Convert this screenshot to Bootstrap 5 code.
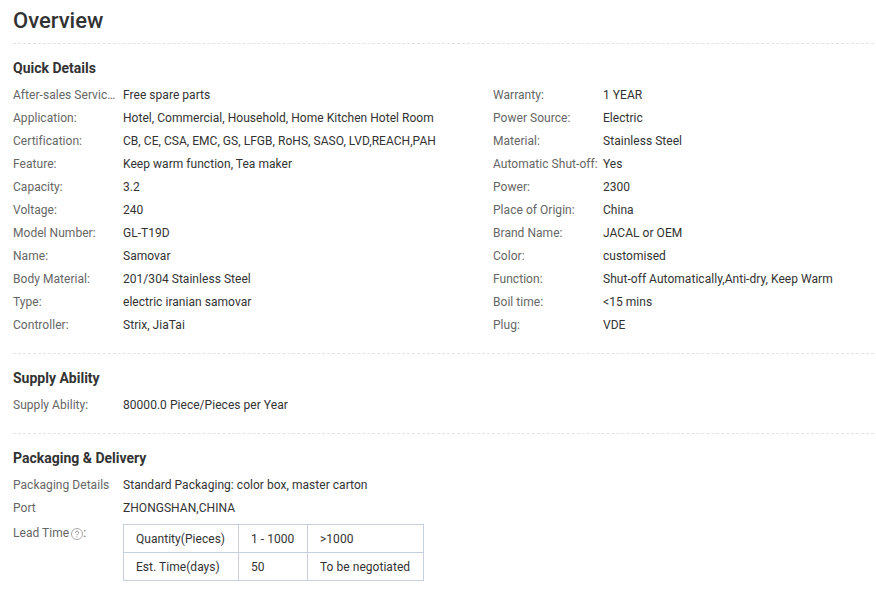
<!DOCTYPE html>
<html lang="en">
<head>
<meta charset="utf-8">
<title>Overview</title>
<link href="https://cdn.jsdelivr.net/npm/bootstrap@5.3.0/dist/css/bootstrap.min.css" rel="stylesheet">
<style>
body { font-family: Roboto, "Liberation Sans", sans-serif; font-size: 12px; line-height: 18px; letter-spacing: .04px; color: #333; background: #fff; }
.pg { padding: 0 2px 0 13px; }
.pg-title { font-size: 22px; line-height: 24px; font-weight: 500; letter-spacing: 0; margin: 0; padding: 9px 0 10px; color: #333; border-bottom: 1px dashed #e1e4e8; }
.sect { border-bottom: 1px dashed #e1e4e8; padding: 15px 0 17px; }
.sect-last { border-bottom: 0; padding-bottom: 0; }
.sect-head { font-size: 14px; line-height: 18px; font-weight: 700; letter-spacing: 0; margin: 0 0 6px; color: #333; }
.spec-grid { display: grid; grid-template-columns: 480px 1fr; }
.spec-row { display: flex; height: 23px; align-items: center; }
.spec-key { flex: 0 0 110px; width: 110px; color: #666; white-space: nowrap; }
.spec-key-cut { padding-right: 5px; overflow: hidden; text-overflow: ellipsis; }
.spec-val { color: #333; white-space: nowrap; }
.lead-row { display: flex; margin-top: 5px; }
.lead-key { flex: 0 0 110px; color: #666; }
.help-ic { display: inline-block; width: 12px; height: 12px; vertical-align: -3px; margin-left: -1px; }
.lead-tb { border-collapse: collapse; width: 301px; table-layout: fixed; }
.lead-tb td { border: 1px solid #c7d0e0; height: 28px; padding: 0 12px; color: #333; white-space: nowrap; }
</style>
</head>
<body>
<div class="pg">
  <h1 class="pg-title">Overview</h1>

  <section class="sect">
    <h2 class="sect-head">Quick Details</h2>
    <div class="spec-grid">
      <div class="spec-row"><div class="spec-key spec-key-cut">After-sales Service Provided:</div><div class="spec-val">Free spare parts</div></div>
      <div class="spec-row"><div class="spec-key">Warranty:</div><div class="spec-val">1 YEAR</div></div>
      <div class="spec-row"><div class="spec-key">Application:</div><div class="spec-val">Hotel, Commercial, Household, Home Kitchen Hotel Room</div></div>
      <div class="spec-row"><div class="spec-key">Power Source:</div><div class="spec-val">Electric</div></div>
      <div class="spec-row"><div class="spec-key">Certification:</div><div class="spec-val">CB, CE, CSA, EMC, GS, LFGB, RoHS, SASO, LVD,REACH,PAH</div></div>
      <div class="spec-row"><div class="spec-key">Material:</div><div class="spec-val">Stainless Steel</div></div>
      <div class="spec-row"><div class="spec-key">Feature:</div><div class="spec-val">Keep warm function, Tea maker</div></div>
      <div class="spec-row"><div class="spec-key">Automatic Shut-off:</div><div class="spec-val">Yes</div></div>
      <div class="spec-row"><div class="spec-key">Capacity:</div><div class="spec-val">3.2</div></div>
      <div class="spec-row"><div class="spec-key">Power:</div><div class="spec-val">2300</div></div>
      <div class="spec-row"><div class="spec-key">Voltage:</div><div class="spec-val">240</div></div>
      <div class="spec-row"><div class="spec-key">Place of Origin:</div><div class="spec-val">China</div></div>
      <div class="spec-row"><div class="spec-key">Model Number:</div><div class="spec-val">GL-T19D</div></div>
      <div class="spec-row"><div class="spec-key">Brand Name:</div><div class="spec-val">JACAL or OEM</div></div>
      <div class="spec-row"><div class="spec-key">Name:</div><div class="spec-val">Samovar</div></div>
      <div class="spec-row"><div class="spec-key">Color:</div><div class="spec-val">customised</div></div>
      <div class="spec-row"><div class="spec-key">Body Material:</div><div class="spec-val">201/304 Stainless Steel</div></div>
      <div class="spec-row"><div class="spec-key">Function:</div><div class="spec-val">Shut-off Automatically,Anti-dry, Keep Warm</div></div>
      <div class="spec-row"><div class="spec-key">Type:</div><div class="spec-val">electric iranian samovar</div></div>
      <div class="spec-row"><div class="spec-key">Boil time:</div><div class="spec-val">&lt;15 mins</div></div>
      <div class="spec-row"><div class="spec-key">Controller:</div><div class="spec-val">Strix, JiaTai</div></div>
      <div class="spec-row"><div class="spec-key">Plug:</div><div class="spec-val">VDE</div></div>
    </div>
  </section>

  <section class="sect">
    <h2 class="sect-head">Supply Ability</h2>
    <div class="spec-row"><div class="spec-key">Supply Ability:</div><div class="spec-val">80000.0 Piece/Pieces per Year</div></div>
  </section>

  <section class="sect sect-last">
    <h2 class="sect-head">Packaging &amp; Delivery</h2>
    <div class="spec-row"><div class="spec-key">Packaging Details</div><div class="spec-val">Standard Packaging: color box, master carton</div></div>
    <div class="spec-row"><div class="spec-key">Port</div><div class="spec-val">ZHONGSHAN,CHINA</div></div>
    <div class="lead-row">
      <div class="lead-key">Lead Time <svg class="help-ic" viewBox="0 0 12 12" aria-hidden="true"><circle cx="6" cy="6" r="5.5" fill="none" stroke="#aaa" stroke-width="1"/><path d="M4.4 4.8c0-1 .7-1.6 1.6-1.6s1.6.6 1.6 1.4c0 1.2-1.6 1.3-1.6 2.6" fill="none" stroke="#888" stroke-width="1"/><circle cx="6" cy="8.8" r=".6" fill="#888"/></svg>:</div>
      <table class="lead-tb">
        <colgroup><col style="width:115px"><col style="width:69px"><col style="width:116px"></colgroup>
        <tr><td>Quantity(Pieces)</td><td>1 - 1000</td><td>&gt;1000</td></tr>
        <tr><td>Est. Time(days)</td><td>50</td><td>To be negotiated</td></tr>
      </table>
    </div>
  </section>
</div>
<script src="https://cdn.jsdelivr.net/npm/bootstrap@5.3.0/dist/js/bootstrap.bundle.min.js"></script>
</body>
</html>
